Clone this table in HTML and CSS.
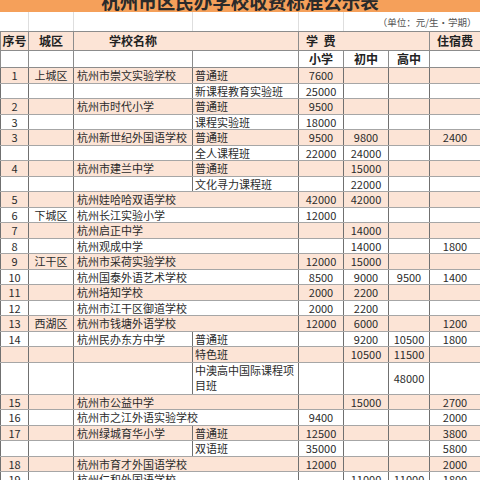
FILE: index.html
```html
<!DOCTYPE html>
<html lang="zh-CN">
<head>
<meta charset="utf-8">
<title>杭州市区民办学校收费标准公示表</title>
<link rel="stylesheet" href="styles.css">
</head>
<body>
<div class="sheet">
  <div class="title"><div class="title-text">杭州市区民办学校收费标准公示表</div></div>
  <table class="fees">
    <colgroup>
      <col class="c-no"><col class="c-dist"><col class="c-school"><col class="c-class">
      <col class="c-p"><col class="c-m"><col class="c-h"><col class="c-dorm">
    </colgroup>
    <tr class="unit">
      <td></td><td></td><td></td><td></td><td></td>
      <td colspan="3" class="unit-text">（单位：元/生·学期）</td>
    </tr>
    <tr class="head1">
      <th>序号</th><th>城区</th><th colspan="2" class="h-school">学校名称</th>
      <th colspan="3" class="h-fee">学&nbsp;&nbsp;费</th><th>住宿费</th>
    </tr>
    <tr class="head2">
      <th></th><th></th><th></th><th></th><th>小学</th><th>初中</th><th>高中</th><th></th>
    </tr>

    <tr class="r odd"><td class="n">1</td><td class="d">上城区</td><td class="s">杭州市崇文实验学校</td><td class="k">普通班</td><td>7600</td><td></td><td></td><td></td></tr>
    <tr class="r"><td class="n"></td><td class="d"></td><td class="s"></td><td class="k">新课程教育实验班</td><td>25000</td><td></td><td></td><td></td></tr>
    <tr class="r odd"><td class="n">2</td><td class="d"></td><td class="s">杭州市时代小学</td><td class="k">普通班</td><td>9500</td><td></td><td></td><td></td></tr>
    <tr class="r"><td class="n">3</td><td class="d"></td><td class="s"></td><td class="k">课程实验班</td><td>18000</td><td></td><td></td><td></td></tr>
    <tr class="r odd"><td class="n">3</td><td class="d"></td><td class="s">杭州新世纪外国语学校</td><td class="k">普通班</td><td>9500</td><td>9800</td><td></td><td>2400</td></tr>
    <tr class="r"><td class="n"></td><td class="d"></td><td class="s"></td><td class="k">全人课程班</td><td>22000</td><td>24000</td><td></td><td></td></tr>
    <tr class="r odd"><td class="n">4</td><td class="d"></td><td class="s">杭州市建兰中学</td><td class="k">普通班</td><td></td><td>15000</td><td></td><td></td></tr>
    <tr class="r"><td class="n"></td><td class="d"></td><td class="s"></td><td class="k">文化寻力课程班</td><td></td><td>22000</td><td></td><td></td></tr>
    <tr class="r odd"><td class="n">5</td><td class="d"></td><td class="s" colspan="2">杭州娃哈哈双语学校</td><td>42000</td><td>42000</td><td></td><td></td></tr>
    <tr class="r"><td class="n">6</td><td class="d">下城区</td><td class="s" colspan="2">杭州长江实验小学</td><td>12000</td><td></td><td></td><td></td></tr>
    <tr class="r odd"><td class="n">7</td><td class="d"></td><td class="s" colspan="2">杭州启正中学</td><td></td><td>14000</td><td></td><td></td></tr>
    <tr class="r"><td class="n">8</td><td class="d"></td><td class="s" colspan="2">杭州观成中学</td><td></td><td>14000</td><td></td><td>1800</td></tr>
    <tr class="r odd"><td class="n">9</td><td class="d">江干区</td><td class="s" colspan="2">杭州市采荷实验学校</td><td>12000</td><td>15000</td><td></td><td></td></tr>
    <tr class="r"><td class="n">10</td><td class="d"></td><td class="s" colspan="2">杭州国泰外语艺术学校</td><td>8500</td><td>9000</td><td>9500</td><td>1400</td></tr>
    <tr class="r odd"><td class="n">11</td><td class="d"></td><td class="s" colspan="2">杭州培知学校</td><td>2000</td><td>2200</td><td></td><td></td></tr>
    <tr class="r"><td class="n">12</td><td class="d"></td><td class="s" colspan="2">杭州市江干区御道学校</td><td>2000</td><td>2200</td><td></td><td></td></tr>
    <tr class="r odd"><td class="n">13</td><td class="d">西湖区</td><td class="s" colspan="2">杭州市钱塘外语学校</td><td>12000</td><td>6000</td><td></td><td>1200</td></tr>
    <tr class="r"><td class="n">14</td><td class="d"></td><td class="s">杭州民办东方中学</td><td class="k">普通班</td><td></td><td>9200</td><td>10500</td><td>1800</td></tr>
    <tr class="r odd"><td class="n"></td><td class="d"></td><td class="s"></td><td class="k">特色班</td><td></td><td>10500</td><td>11500</td><td></td></tr>
    <tr class="r tall"><td class="n"></td><td class="d"></td><td class="s"></td><td class="k wrap">中澳高中国际课程项目班</td><td></td><td></td><td>48000</td><td></td></tr>
    <tr class="r odd"><td class="n">15</td><td class="d"></td><td class="s" colspan="2">杭州市公益中学</td><td></td><td>15000</td><td></td><td>2700</td></tr>
    <tr class="r"><td class="n">16</td><td class="d"></td><td class="s" colspan="2">杭州市之江外语实验学校</td><td>9400</td><td></td><td></td><td>2000</td></tr>
    <tr class="r odd"><td class="n">17</td><td class="d"></td><td class="s">杭州绿城育华小学</td><td class="k">普通班</td><td>12500</td><td></td><td></td><td>3800</td></tr>
    <tr class="r"><td class="n"></td><td class="d"></td><td class="s"></td><td class="k">双语班</td><td>35000</td><td></td><td></td><td>5800</td></tr>
    <tr class="r odd"><td class="n">18</td><td class="d"></td><td class="s" colspan="2">杭州市育才外国语学校</td><td>12000</td><td></td><td></td><td>2000</td></tr>
    <tr class="r"><td class="n">19</td><td class="d"></td><td class="s" colspan="2">杭州仁和外国语学校</td><td></td><td>11000</td><td>11000</td><td>1800</td></tr>
  </table>
</div>
</body>
</html>
```

FILE: styles.css
```css
html, body {
  margin: 0;
  padding: 0;
  background: #ffffff;
}
body {
  width: 480px;
  height: 480px;
  overflow: hidden;
  font-family: "Noto Sans CJK SC", "Noto Sans", sans-serif;
  color: #2b2b2b;
}
.sheet {
  width: 480px;
}
.title {
  display: flex;
  justify-content: center;
  align-items: flex-end;
  height: 12px;
  overflow: hidden;
  background: #f5a05a;
}
.title-text {
  flex: none;
  margin-bottom: 2px;
  line-height: 18px;
  font-size: 18.5px;
  font-weight: bold;
  white-space: nowrap;
  color: #2a2a2a;
}
.fees {
  width: 480px;
  table-layout: fixed;
  border-collapse: collapse;
  font-size: 11px;
}
.c-no { width: 28px; }
.c-dist { width: 45px; }
.c-school { width: 119px; }
.c-class { width: 106px; }
.c-p { width: 45px; }
.c-m { width: 45px; }
.c-h { width: 41px; }
.c-dorm { width: 51px; }

.fees td, .fees th {
  padding: 0;
  white-space: nowrap;
  overflow: hidden;
  vertical-align: middle;
  text-align: center;
  line-height: 14px;
}

.unit td {
  height: 19px;
  border-top: none;
  border-left: 1px solid #dedede;
  border-right: 1px solid #dedede;
  border-bottom: 1px solid #8c8c8c;
}
.unit td:first-child { border-left: none; }
.unit .unit-text {
  text-align: right;
  padding-right: 4px;
  font-size: 9.5px;
  color: #555555;
  border-right: none;
}

.head1 th, .head2 th {
  font-size: 12px;
  font-weight: bold;
  color: #222222;
  border: 1px solid #8c8c8c;
}
.head1 th {
  height: 18px;
  background: #fce4d6;
}
.head2 th {
  height: 16px;
  background: #ffffff;
}
.head1 .h-school {
  text-align: left;
  padding-left: 35px;
}
.head1 .h-fee {
  text-align: left;
  padding-left: 7px;
}

.r td {
  height: 14.5px;
  border-top: 1px solid #a6a6a6;
  border-bottom: 1px solid #a6a6a6;
  border-left: 1px solid #707070;
  border-right: 1px solid #707070;
  background: #ffffff;
}
.r.odd td {
  background: #fce4d6;
}
.r.tall td {
  height: 30px;
}
.r .s {
  text-align: left;
  padding-left: 3px;
}
.r .k {
  text-align: left;
  padding-left: 2px;
}
.r .k.wrap {
  white-space: normal;
  line-height: 15.5px;
}
```
